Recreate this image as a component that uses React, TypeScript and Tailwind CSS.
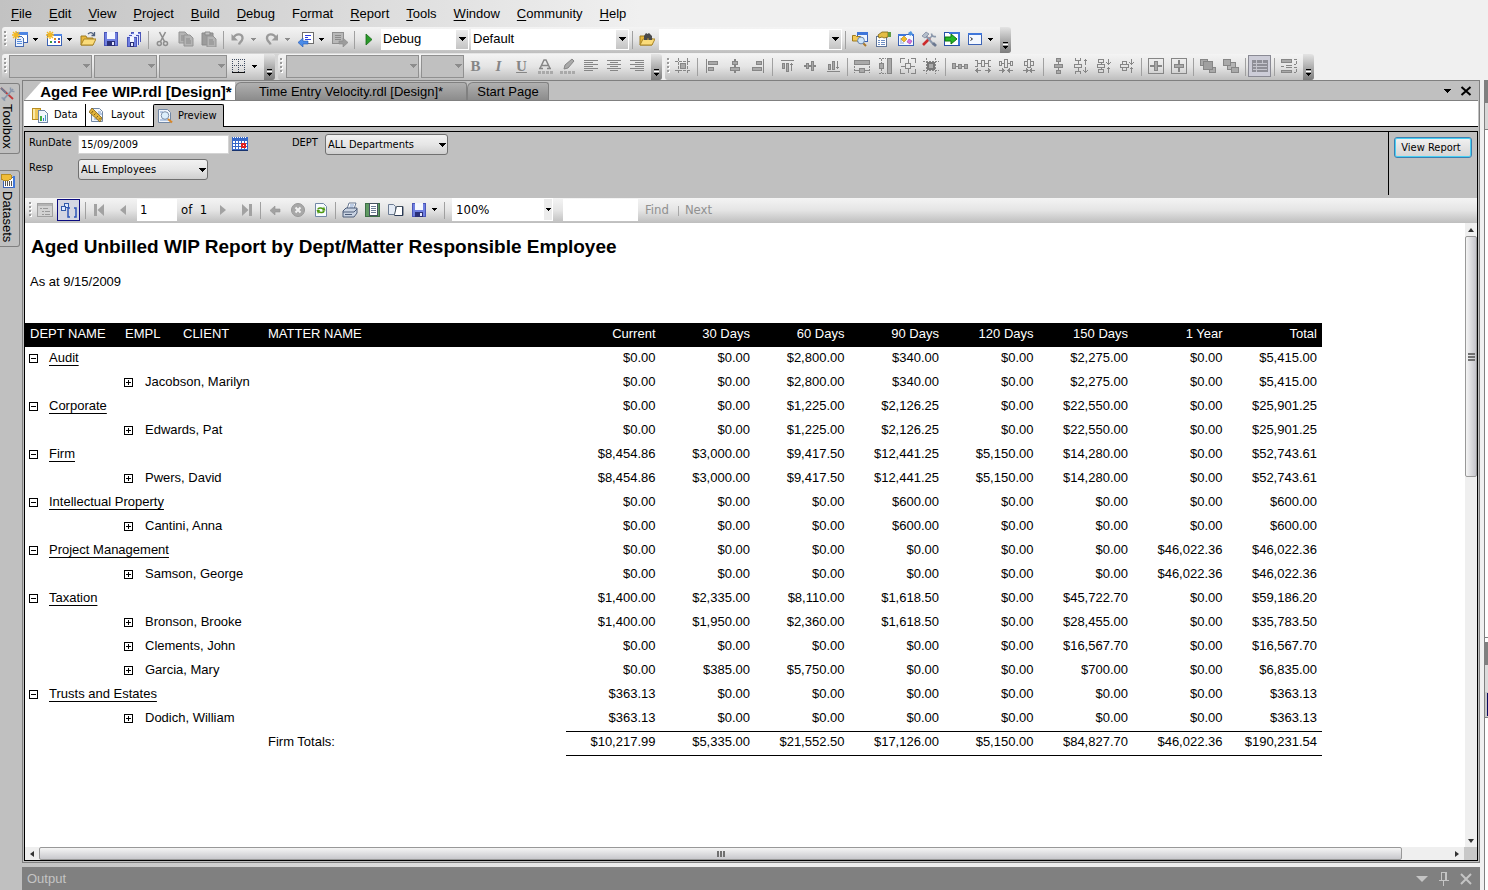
import React, { ReactNode } from "react";

const G = "#868686";
const L = "#a9a9a9";

function Svg({ children, smooth }: { children: ReactNode; smooth?: boolean }) {
  return (
    <svg
      viewBox="0 0 16 16"
      className="h-4 w-4 shrink-0"
      fill="none"
      aria-hidden="true"
      shapeRendering={smooth ? "auto" : "crispEdges"}
    >
      {children}
    </svg>
  );
}

const Star = () => (
  <path d="M4 0v8M0 4h8M1 1l6 6M7 1L1 7" stroke="#f2b824" strokeWidth="1.4" shapeRendering="auto" />
);

const Disk = ({ x = 1, y = 1, s = 14 }: { x?: number; y?: number; s?: number }) => (
  <g>
    <rect x={x} y={y} width={s} height={s} fill="#4a55b8" />
    <rect x={x + 1} y={y + 1} width={s - 2} height={s - 2} fill="#6f7fe0" />
    <rect x={x + 3} y={y} width={s - 6} height={Math.round(s / 2)} fill="#f4f7ff" />
    <rect x={x + 3} y={y + s - 5} width={s - 6} height={5} fill="#2b3078" />
    <rect x={x + s - 6} y={y + s - 4} width={2} height={3} fill="#e4e8ff" />
  </g>
);

const Sheet = ({ x, y }: { x: number; y: number }) => (
  <g>
    <path d={`M${x} ${y}h6l3 3v8h-9z`} fill="#b4b4b4" stroke="#949494" />
    <path d={`M${x + 2} ${y + 4}h4M${x + 2} ${y + 6}h5M${x + 2} ${y + 8}h5`} stroke="#8a8a8a" />
  </g>
);

const Folder = () => (
  <g shapeRendering="auto">
    <path d="M1 14V5h5l1 2h6v7z" fill="#e9b73a" stroke="#9c7a1e" />
    <path d="M1 14l3-6h12l-3 6z" fill="#fbdc7a" stroke="#a98527" />
  </g>
);

const icons: Record<string, ReactNode> = {
  newProject: (
    <Svg>
      <rect x="4.500" y="1.500" width="11" height="10" fill="#fff" stroke="#3b62b5" />
      <rect x="4" y="1" width="12" height="3" fill="#4f86e4" />
      <path d="M3.500 5.500h6l2 2v8h-8z" fill="#e9f1ff" stroke="#4a6db0" />
      <path d="M5 8.500h4M5 10.500h5M5 12.500h5" stroke="#5b8fdc" />
      <Star />
    </Svg>
  ),
  addItem: (
    <Svg>
      <rect x="1.500" y="3.500" width="14" height="11" fill="#fff" stroke="#3b62b5" />
      <rect x="7" y="3" width="9" height="2" fill="#4f86e4" />
      <rect x="8" y="7" width="2" height="2" fill="#e08a1e" />
      <rect x="12" y="7" width="2" height="2" fill="#3a62c8" />
      <rect x="4" y="10" width="2" height="2" fill="#3a9a3a" />
      <rect x="8" y="10" width="2" height="2" fill="#3a62c8" />
      <rect x="12" y="10" width="2" height="2" fill="#cf3434" />
      <Star />
    </Svg>
  ),
  open: (
    <Svg smooth>
      <Folder />
      <path d="M8 3c2-2 4-2 6 1M14.500 1v3.500h-3" stroke="#4e5f7c" strokeWidth="1.300" />
    </Svg>
  ),
  save: (
    <Svg>
      <Disk />
    </Svg>
  ),
  saveAll: (
    <Svg>
      <Disk x={5} y={1} s={10} />
      <path d="M3 3h11v11H3z" fill="#dfe4ff" />
      <Disk x={3} y={4} s={10} />
      <path d="M1 5h11v10H1z" fill="#dfe4ff" />
      <Disk x={1} y={6} s={10} />
    </Svg>
  ),
  cut: (
    <Svg smooth>
      <path d="M4.500 1l5 9.500M10.500 1l-5 9.500" stroke="#8e8e8e" strokeWidth="1.600" />
      <circle cx="4.300" cy="12.500" r="2" stroke="#8e8e8e" strokeWidth="1.500" />
      <circle cx="10.500" cy="12.500" r="2" stroke="#8e8e8e" strokeWidth="1.500" />
    </Svg>
  ),
  copy: (
    <Svg smooth>
      <Sheet x={1} y={1} />
      <Sheet x={6} y={4} />
    </Svg>
  ),
  paste: (
    <Svg smooth>
      <path d="M1 2h11v12H1z" fill="#9c9c9c" stroke="#8a8a8a" />
      <path d="M4 1h5v3H4z" fill="#c4c4c4" stroke="#8a8a8a" />
      <Sheet x={6} y={5} />
    </Svg>
  ),
  undo: (
    <Svg smooth>
      <path d="M3 7.500c3-6 10-5 9.500 0c-.3 3-3 3.500-3.500 6" stroke="#9a9a9a" strokeWidth="2.400" />
      <path d="M1.500 3v6.500H8z" fill="#9a9a9a" />
    </Svg>
  ),
  redo: (
    <Svg smooth>
      <path d="M12.500 7.500c-3-6-10-5-9.500 0c.3 3 3 3.500 3.500 6" stroke="#9a9a9a" strokeWidth="2.400" />
      <path d="M14 3v6.500H7.500z" fill="#9a9a9a" />
    </Svg>
  ),
  navBack: (
    <Svg>
      <rect x="4.500" y="1.500" width="11" height="11" fill="#fff" stroke="#6d6d6d" />
      <path d="M7 4.500h6M7 6.500h3M7 8.500h6" stroke="#2a3fe0" />
      <path d="M0 11.500L5 7v3h5v3H5v3z" fill="#4a8be8" stroke="#2457b0" strokeWidth=".6" shapeRendering="auto" />
    </Svg>
  ),
  navForward: (
    <Svg>
      <rect x=".5" y="1.500" width="11" height="11" fill="#b8b8b8" stroke="#8e8e8e" />
      <path d="M3 4.500h6M3 6.500h6M3 8.500h6" stroke="#8a8a8a" />
      <path d="M16 11.500L11 7v3H7v3h4v3z" fill="#9c9c9c" stroke="#868686" strokeWidth=".6" shapeRendering="auto" />
    </Svg>
  ),
  play: (
    <Svg smooth>
      <path d="M5 3v11l6-5.500z" fill="#2a9a2a" stroke="#166a16" strokeWidth=".8" />
    </Svg>
  ),
  findFiles: (
    <Svg smooth>
      <Folder />
      <path d="M5 9V5l2-3 1.500 1L10 2l3 3v4H9.500V7h-1v2z" fill="#4a4a4a" />
    </Svg>
  ),
  explorer: (
    <Svg smooth>
      <rect x="5.500" y="1.500" width="10" height="9" fill="#eef4ff" stroke="#3b62b5" />
      <rect x="5" y="1" width="11" height="3" fill="#3f76da" />
      <path d="M.5 10V4.500h3l1 1h4V10z" fill="#f4ca56" stroke="#9c7a1e" />
      <path d="M11 12l3 3" stroke="#a9772a" strokeWidth="2" />
      <circle cx="9" cy="9.500" r="3.400" fill="#cfe6fb" stroke="#6b86ab" />
    </Svg>
  ),
  properties: (
    <Svg smooth>
      <rect x="1.500" y="5.500" width="10" height="10" fill="#fff" stroke="#5f7396" />
      <path d="M3 9.500h2M6 9.500h4M3 11.500h2M6 11.500h4M3 13.500h2M6 13.500h4" stroke="#6f8fc4" />
      <path d="M3 4l4-3h6v5L9 7 7 6 4 7z" fill="#e3bd45" stroke="#7c6212" strokeWidth=".8" />
      <path d="M13 1h3v5h-3z" fill="#5f9a42" />
    </Svg>
  ),
  toolWindow: (
    <Svg smooth>
      <rect x=".5" y="3.500" width="15" height="11" fill="#f4f8ff" stroke="#3b62b5" />
      <path d="M0 3h8v2H0zM14 3h2v2h-2z" fill="#3f76da" />
      <path d="M2 8h3M2 10h2M2 12h4" stroke="#88a6d8" />
      <path d="M6 5l3 3-3 3-3-3z" fill="#f2b824" stroke="#b98510" strokeWidth=".6" />
      <path d="M11 8l3 2-2 3-3-2z" fill="#d873e0" stroke="#9a3fa5" strokeWidth=".6" />
      <path d="M10 2l3-2 2 3-3 2z" fill="#4f93e0" />
    </Svg>
  ),
  toolbox: (
    <Svg smooth>
      <path d="M2 14l7-7" stroke="#cc2b2b" strokeWidth="2.600" />
      <path d="M8 8l4-4" stroke="#8a97ab" strokeWidth="1.500" />
      <path d="M13 14L5 5" stroke="#8a97ab" strokeWidth="2" />
      <path d="M1 5l4-4 3 2-4 4z" fill="#b4bdca" stroke="#76839a" strokeWidth=".7" />
      <path d="M10.500 2.500c0 3 2 3.500 4.500 3" stroke="#8a97ab" strokeWidth="1.600" />
      <path d="M12 12l3 3" stroke="#6b7890" strokeWidth="2.600" />
    </Svg>
  ),
  tools: (
    <Svg smooth>
      <path d="M1 2l12 11" stroke="#c23a3a" strokeWidth="1.800" />
      <path d="M1 2l5 5" stroke="#6f7c92" strokeWidth="1.800" />
      <path d="M13 3L3 14" stroke="#8a97ab" strokeWidth="1.800" />
      <path d="M10.500 1.500c-.5 3 1.500 4.500 4 4M1.500 12c2-.5 3.500 1 3 3" stroke="#8a97ab" strokeWidth="1.500" />
    </Svg>
  ),
  startPage: (
    <Svg>
      <rect x=".5" y="1.500" width="15" height="13" fill="#fff" stroke="#2850a8" />
      <rect x="5" y="1" width="11" height="2" fill="#3f76da" />
      <rect x="14" y="3" width="2" height="11" fill="#3f76da" />
      <path d="M1 6h6V3l6 5-6 5v-3H1z" fill="#27b827" stroke="#11750f" shapeRendering="auto" />
    </Svg>
  ),
  command: (
    <Svg>
      <rect x="1.500" y="2.500" width="13" height="11" fill="#f4f8ff" stroke="#3b62b5" />
      <rect x="1" y="2" width="14" height="2" fill="#3f76da" />
      <path d="M3.500 6.500l2 1.500-2 1.500" stroke="#222" shapeRendering="auto" />
    </Svg>
  ),
  borders: (
    <Svg>
      <path d="M1.500 1v13M7.500 1v13M13.500 1v13M1 1.500h13M1 7.500h13" stroke="#3d4a5e" strokeDasharray="1 1" />
      <path d="M1 14.500h13" stroke="#111" />
    </Svg>
  ),
  fontColor: (
    <Svg>
      <path d="M3 10.500L7 2h2l4 8.500M5 7.500h6M2 10.500h4M10 10.500h4" stroke={G} strokeWidth="1.500" shapeRendering="auto" />
      <path d="M1 14h15" stroke={L} strokeWidth="3" strokeDasharray="3 1" />
    </Svg>
  ),
  highlight: (
    <Svg>
      <path d="M4 11l1-4 7-6 2 2-6 7z" fill={L} stroke={G} shapeRendering="auto" />
      <path d="M0 14h15" stroke={L} strokeWidth="3" strokeDasharray="3 1" />
    </Svg>
  ),
  alignL: (
    <Svg>
      <path d="M1 2.500h14M1 4.500h9M1 6.500h14M1 8.500h9M1 10.500h14M1 12.500h9" stroke={G} />
    </Svg>
  ),
  alignC: (
    <Svg>
      <path d="M1 2.500h14M4 4.500h8M1 6.500h14M4 8.500h8M1 10.500h14M4 12.500h8" stroke={G} />
    </Svg>
  ),
  alignR: (
    <Svg>
      <path d="M1 2.500h14M6 4.500h9M1 6.500h14M6 8.500h9M1 10.500h14M6 12.500h9" stroke={G} />
    </Svg>
  ),
  snapGrid: (
    <Svg>
      <path d="M3.500 0v16M12.500 0v16M0 3.500h16M0 12.500h16" stroke={G} strokeDasharray="3 1" />
      <rect x="5.500" y="5.500" width="5" height="5" fill={L} stroke={G} />
    </Svg>
  ),
  lefts: (
    <Svg>
      <path d="M2.500 1v14" stroke={G} />
      <rect x="4.500" y="3.500" width="9" height="3" fill={L} stroke={G} />
      <rect x="4.500" y="9.500" width="5" height="3" fill={L} stroke={G} />
    </Svg>
  ),
  centers: (
    <Svg>
      <path d="M8 1v14" stroke={G} strokeWidth="2" />
      <rect x="5.500" y="3.500" width="5" height="3" fill={L} stroke={G} />
      <rect x="3.500" y="9.500" width="9" height="3" fill={L} stroke={G} />
    </Svg>
  ),
  rights: (
    <Svg>
      <path d="M13.500 1v14" stroke={G} strokeWidth="1" />
      <rect x="6.500" y="3.500" width="5" height="3" fill={L} stroke={G} />
      <rect x="2.500" y="9.500" width="9" height="3" fill={L} stroke={G} />
    </Svg>
  ),
  tops: (
    <Svg>
      <path d="M2 2.500h13M12.500 5v8M11 6.500h3" stroke={G} />
      <rect x="3.500" y="5.500" width="2" height="5" fill={L} stroke={G} />
      <rect x="7.500" y="5.500" width="2" height="8" fill={L} stroke={G} />
    </Svg>
  ),
  middles: (
    <Svg>
      <path d="M2 8h12" stroke={G} strokeWidth="2" />
      <rect x="4.500" y="5.500" width="2" height="5" fill={L} stroke={G} />
      <rect x="9.500" y="3.500" width="2" height="9" fill={L} stroke={G} />
    </Svg>
  ),
  bottoms: (
    <Svg>
      <path d="M2 13.500h13M12.500 3v8M11 9.500h3" stroke={G} />
      <rect x="3.500" y="6.500" width="2" height="5" fill={L} stroke={G} />
      <rect x="7.500" y="3.500" width="2" height="8" fill={L} stroke={G} />
    </Svg>
  ),
  sameWidth: (
    <Svg>
      <rect x=".5" y="2.500" width="15" height="4" fill={L} stroke={G} />
      <path d="M.5 8v7M15.500 8v7" stroke={G} strokeDasharray="2 1" />
      <path d="M1 12.500h4M11 12.500h4" stroke={G} />
      <rect x="5.500" y="10.500" width="5" height="4" fill={L} stroke={G} />
    </Svg>
  ),
  sameHeight: (
    <Svg>
      <rect x="10.500" y=".5" width="4" height="15" fill={L} stroke={G} />
      <path d="M2 .5h7M2 15.500h7M4.500 1v4M4.500 11v4" stroke={G} strokeDasharray="2 1" />
      <rect x="2.500" y="5.500" width="4" height="5" fill={L} stroke={G} />
    </Svg>
  ),
  sameSize: (
    <Svg>
      <path d="M.5 5V.5H5M11 .5h4.500V5M15.500 11v4.500H11M5 15.500H.5V11M8.500 1v4M8.500 11v4M1 8.500h4M11 8.500h4" stroke={G} />
      <rect x="5.500" y="5.500" width="5" height="5" stroke={G} />
    </Svg>
  ),
  sizeGrid: (
    <Svg>
      <path d="M3.500 0v16M12.500 0v16M0 3.500h16M0 12.500h16" stroke={G} strokeDasharray="2 1" />
      <rect x="4" y="4" width="8" height="8" fill="#777" />
      <rect x="6" y="6" width="4" height="4" fill={L} />
    </Svg>
  ),
  hEqual: (
    <Svg>
      <path d="M0 8.500h16" stroke={G} />
      <rect x=".5" y="5.500" width="3" height="5" fill={L} stroke={G} />
      <rect x="6.500" y="6.500" width="3" height="4" fill={L} stroke={G} />
      <rect x="12.500" y="6.500" width="3" height="4" fill={L} stroke={G} />
    </Svg>
  ),
  hMore: (
    <Svg>
      <path d="M0 2.500h2.500v6H0M16 2.500h-2.500v6h2.500M3 5.500h3M10 5.500h3M1 12.500h5M10 12.500h5M3 10.500l-2 2 2 2M13 10.500l2 2-2 2" stroke={G} />
      <rect x="6.500" y="2.500" width="3" height="6" stroke={G} />
    </Svg>
  ),
  hLess: (
    <Svg>
      <path d="M1.500 3.500h2v4h-2zM12.500 3.500h2v4h-2zM4 5.500h2M10 5.500h2M1 12.500h5M10 12.500h5M4 10.500l2 2-2 2M12 10.500l-2 2 2 2" stroke={G} />
      <rect x="6.500" y="1.500" width="3" height="8" stroke={G} />
    </Svg>
  ),
  hNone: (
    <Svg>
      <path d="M3.500 3.500h3v4h-3zM9.500 3.500h3v4h-3zM2 12.500h5M9 12.500h5M5 10.500l2 2-2 2M11 10.500l-2 2 2 2" stroke={G} />
      <rect x="6.500" y="1.500" width="3" height="8" stroke={G} />
    </Svg>
  ),
  vEqual: (
    <Svg>
      <path d="M8.500 0v16" stroke={G} />
      <rect x="6.500" y=".5" width="4" height="3" fill={L} stroke={G} />
      <rect x="4.500" y="6.500" width="8" height="3" fill={L} stroke={G} />
      <rect x="6.500" y="12.500" width="4" height="3" fill={L} stroke={G} />
    </Svg>
  ),
  vMore: (
    <Svg>
      <path d="M2.500 0v2.500h5V0M2.500 16v-2.500h5V16M5 3v3M5 10v3M12.500 1v6M12.500 9v6M10.500 3.500l2-2 2 2M10.500 12.500l2 2 2-2" stroke={G} />
      <rect x="1.500" y="6.500" width="7" height="3" stroke={G} />
    </Svg>
  ),
  vLess: (
    <Svg>
      <path d="M2.500 1.500h5v3h-5zM2.500 11.500h5v3h-5zM5 4v3M5 9v3M12.500 1v6M12.500 9v6M10.500 4.500l2 2 2-2M10.500 11.500l2-2 2 2" stroke={G} />
      <rect x="1.500" y="6.500" width="7" height="3" stroke={G} />
    </Svg>
  ),
  vNone: (
    <Svg>
      <path d="M3.500 3.500h4v3h-4zM3.500 9.500h4v3h-4zM12.500 1v6M12.500 9v6M10.500 4.500l2 2 2-2M10.500 11.500l2-2 2 2" stroke={G} />
      <rect x="1.500" y="6.500" width="8" height="3" stroke={G} />
    </Svg>
  ),
  centerH: (
    <Svg>
      <rect x=".5" y=".5" width="15" height="15" stroke={G} />
      <path d="M2 8h12" stroke={G} strokeWidth="2" />
      <rect x="6.500" y="3.500" width="3" height="9" fill={L} stroke={G} />
    </Svg>
  ),
  centerV: (
    <Svg>
      <rect x=".5" y=".5" width="15" height="15" stroke={G} />
      <path d="M8 2v12" stroke={G} strokeWidth="2" />
      <rect x="3.500" y="6.500" width="9" height="3" fill={L} stroke={G} />
    </Svg>
  ),
  toFront: (
    <Svg>
      <rect x=".5" y="1.500" width="7" height="6" fill={L} stroke={G} />
      <rect x="9.500" y="9.500" width="6" height="5" fill={L} stroke={G} />
      <rect x="3.500" y="3.500" width="9" height="8" fill="#a0a0a0" stroke={G} />
    </Svg>
  ),
  toBack: (
    <Svg>
      <rect x="4.500" y="4.500" width="8" height="7" fill="#b4b4b4" stroke={G} />
      <rect x=".5" y="1.500" width="7" height="6" fill={L} stroke={G} />
      <rect x="8.500" y="9.500" width="7" height="5" fill={L} stroke={G} />
    </Svg>
  ),
  tableGrid: (
    <Svg>
      <rect x="0" y="2" width="16" height="12" fill="#8e8e96" />
      <path d="M1 5.500h14M1 8.500h14M1 11.500h14M4.500 2v12M10.500 2v4" stroke="#c4c4cc" />
    </Svg>
  ),
  tabOrder: (
    <Svg>
      <rect x=".5" y="1.500" width="10" height="3" fill={L} stroke={G} />
      <path d="M0 8.500h3M5 7.500h6M5 9.500h6" stroke={G} />
      <rect x=".5" y="12.500" width="10" height="2" fill={L} stroke={G} />
      <path d="M13 1.500h2.500v5H13M13 9.500h2.500v5H13" stroke={G} strokeDasharray="3 1" />
    </Svg>
  ),
  data: (
    <Svg>
      <rect x="0" y="1" width="8" height="11" fill="#efc758" stroke="#b98e22" />
      <rect x="1" y="2" width="2" height="10" fill="#fbe9a8" />
      <path d="M6.500 3.500h6l3 3v9h-9z" fill="#f1f6fc" stroke="#7187a5" />
      <path d="M9 9v5" stroke="#3fae3f" strokeWidth="2" />
      <path d="M11.500 11v3" stroke="#3f6fd0" />
      <path d="M13.500 8v6" stroke="#3fa0c0" />
    </Svg>
  ),
  layout: (
    <Svg smooth>
      <path d="M2.500 1.500h8l3 3v10h-11z" fill="#f1f6fc" stroke="#7187a5" />
      <path d="M9 7h4M9 5h3M5 12h4" stroke="#7c9ccc" />
      <path d="M0 5l3-4 10 10-2 4z" fill="#e0b23a" stroke="#7f611a" strokeWidth=".8" />
      <path d="M4 4l-1.500 2M6.500 6.500L5 8M9 9l-1.500 1.500M11.500 11L10 12.500" stroke="#7f611a" />
    </Svg>
  ),
  preview: (
    <Svg smooth>
      <path d="M1.500 1.500h9l3 3v10h-12z" fill="#f1f6fc" stroke="#7187a5" />
      <path d="M3 4h3M3 12h8" stroke="#7c9ccc" />
      <path d="M11 11l4 3.500" stroke="#d8872a" strokeWidth="2.200" />
      <circle cx="8" cy="7.500" r="3.800" fill="#dceefb" stroke="#7d8fa8" />
    </Svg>
  ),
  calendar: (
    <Svg>
      <rect x="0" y="1" width="16" height="14" fill="#3567c8" />
      <rect x="0" y="14" width="16" height="1" fill="#17336f" />
      <path d="M1 1.500h14" stroke="#fff" strokeDasharray="1 1" />
      <path d="M1 6h14M1 9h14M1 12h14" stroke="#fff" strokeWidth="2" strokeDasharray="2 1" />
      <rect x="9" y="7" width="5" height="5" fill="#e02020" />
      <rect x="11" y="9" width="1" height="1" fill="#fff" />
    </Svg>
  ),
  docMap: (
    <Svg>
      <rect x=".5" y="1.500" width="15" height="13" fill="#d2d2d2" stroke="#a0a0a0" />
      <path d="M1 3h14" stroke="#b4b4b4" strokeWidth="2" />
      <path d="M3 6.500h2M6 6.500h5M5 9.500h2M8 9.500h5M5 12.500h2M8 12.500h5" stroke="#999" />
    </Svg>
  ),
  paramTree: (
    <Svg>
      <rect x="3.500" y="1.500" width="4" height="4" fill="#dce8ff" stroke="#3159a8" />
      <rect x=".5" y="4.500" width="4" height="4" fill="#dce8ff" stroke="#3159a8" />
      <path d="M9 6h-2v9h2M13 6h2v9h-2" stroke="#2c55b8" strokeWidth="1.500" shapeRendering="auto" />
    </Svg>
  ),
  first: (
    <Svg smooth>
      <rect x="2" y="2" width="3" height="12" fill="#a2a2a2" />
      <path d="M12 2v12L5.500 8z" fill="#a2a2a2" />
    </Svg>
  ),
  prev: (
    <Svg smooth>
      <path d="M11 3v10L5 8z" fill="#a2a2a2" />
    </Svg>
  ),
  next: (
    <Svg smooth>
      <path d="M5 3v10l6-5z" fill="#a2a2a2" />
    </Svg>
  ),
  last: (
    <Svg smooth>
      <rect x="11" y="2" width="3" height="12" fill="#a2a2a2" />
      <path d="M4 2v12l6.500-6z" fill="#a2a2a2" />
    </Svg>
  ),
  back: (
    <Svg smooth>
      <path d="M3 8.500L8 4v3h5v3H8v3z" fill="#a2a2a2" stroke="#949494" strokeWidth=".6" />
    </Svg>
  ),
  stop: (
    <Svg smooth>
      <circle cx="8" cy="8" r="6.500" fill="#a8a8a8" stroke="#989898" />
      <path d="M5.500 5.500l5 5M10.500 5.500l-5 5" stroke="#f0f0f0" strokeWidth="2" />
    </Svg>
  ),
  refresh: (
    <Svg smooth>
      <path d="M2.500 1.500h8l3 3v10h-11z" fill="#f7fbff" stroke="#7187a5" />
      <path d="M5 7.500c0-2 4-2 5-.5M11 8.500c0 2.500-4 2.500-5.500 1" stroke="#4f9a12" strokeWidth="1.500" />
      <path d="M9 8.500h3.500L11 4.500zM7 8H3.500L5 12z" fill="#4f9a12" />
    </Svg>
  ),
  print: (
    <Svg smooth>
      <path d="M5 7l2-6h7l-2 6z" fill="#fff" stroke="#687892" />
      <path d="M8 3h4M7.500 5h4" stroke="#7c9ccc" />
      <path d="M1 9l3-3h11v5l-3 4H1z" fill="#c9d3e2" stroke="#4c5c78" />
      <path d="M1 10h11l3-3M3 12.500h7" stroke="#4c5c78" />
    </Svg>
  ),
  printLayout: (
    <Svg>
      <rect x=".5" y="1.500" width="14" height="13" fill="#5f9a62" stroke="#3d6e46" />
      <rect x="4.500" y="1.500" width="8" height="12" fill="#fff" stroke="#44515f" />
      <path d="M6 4.500h5M6 6.500h5M6 8.500h5M6 10.500h5" stroke="#6c7c94" />
    </Svg>
  ),
  pageSetup: (
    <Svg smooth>
      <path d="M.5 2.500h5l2 2v8h-7z" fill="#e4ebf5" stroke="#6c7c94" />
      <path d="M6.500 12.500l2-8h6.500v9H6.500z" fill="#fff" stroke="#44515f" />
      <path d="M14.500 5v8.500H7" stroke="#2d3c58" />
    </Svg>
  ),
  dataset: (
    <Svg>
      <rect x="3.500" y="4.500" width="11" height="10" fill="#fff" stroke="#3b62b5" />
      <rect x="13" y="3" width="2" height="12" fill="#3f76da" />
      <path d="M5.500 8v5M7.500 8v5M9.500 8v5M11.500 8v5" stroke="#555" />
      <path d="M1 2l2-1h6l2 1v4l-2 1H3L1 6z" fill="#f0bd3a" stroke="#b98e22" />
    </Svg>
  ),
};

const letterIcon: Record<string, [string, string]> = {
  bold: ["B", "font-bold"],
  italic: ["I", "italic font-bold"],
  underline: ["U", "underline font-bold"],
};

function IconButton({ name, pressed }: { name: string; pressed?: boolean }) {
  return (
    <button
      type="button"
      aria-label={name}
      className={
        pressed
          ? "flex h-[22px] w-[23px] shrink-0 items-center justify-center border border-[#8a8a94] bg-[#cdcdd8]"
          : "flex h-[22px] w-[23px] shrink-0 items-center justify-center"
      }
    >
      {letterIcon[name] ? (
        <span className={`font-["Liberation_Serif",serif] text-[15px] leading-4 text-[#868686] ${letterIcon[name][1]}`}>
          {letterIcon[name][0]}
        </span>
      ) : (
        icons[name]
      )}
    </button>
  );
}

function Arrow({ light }: { light?: boolean }) {
  return (
    <svg viewBox="0 0 5 3" className="h-[3px] w-[5px]" aria-hidden="true" shapeRendering="crispEdges">
      <path d="M0 0h5v1H0zM1 1h3v1H1zM2 2h1v1H2z" fill={light ? "#8c8c8c" : "#000"} />
    </svg>
  );
}

function BigArrow({ fill = "#000" }: { fill?: string }) {
  return (
    <svg viewBox="0 0 8 4" className="h-1 w-2" aria-hidden="true" shapeRendering="crispEdges">
      <path d="M0 0h8L4 4z" fill={fill} />
    </svg>
  );
}

function Drop({ light, label }: { light?: boolean; label: string }) {
  return (
    <button type="button" aria-label={label} className="flex h-[22px] w-[11px] shrink-0 items-center justify-start pl-[2px]">
      <Arrow light={light} />
    </button>
  );
}

const Sep = () => (
  <div className="flex w-[6px] shrink-0 justify-center self-stretch pt-1 pb-[2px]">
    <div className="w-px bg-[#a0a0a0]" />
  </div>
);

function Grip() {
  return (
    <svg viewBox="0 0 6 16" className="h-4 w-[6px] shrink-0" aria-hidden="true" shapeRendering="crispEdges">
      {[0, 4, 8, 12].map((y) => (
        <g key={y}>
          <rect x="3" y={y + 1} width="2" height="2" fill="#fff" />
          <rect x="2" y={y} width="2" height="2" fill="#9a9a9a" />
        </g>
      ))}
    </svg>
  );
}

function Overflow() {
  return (
    <button
      type="button"
      aria-label="Toolbar options"
      className="-mb-[2px] ml-[3px] flex w-[11px] shrink-0 flex-col items-center justify-end gap-px self-stretch rounded-r-[3px] bg-linear-to-b from-[#e4e4e4] to-[#7c7c7c] pb-1"
    >
      <span className="h-px w-[5px] bg-black" />
      <span className="h-px w-[5px] bg-white" />
      <Arrow />
    </button>
  );
}

function FlatCombo({ label, value, className }: { label: string; value: string; className: string }) {
  return (
    <div className={`relative h-[21px] shrink-0 ${className}`}>
      <select
        aria-label={label}
        className="block h-full w-full appearance-none bg-white pl-[2px] text-[13px] leading-4 text-black"
      >
        <option>{value}</option>
      </select>
      <span className="pointer-events-none absolute inset-y-px right-px flex w-3 items-center justify-center bg-linear-to-b from-[#ececec] to-[#c4c4c4]">
        <svg viewBox="0 0 7 4" className="h-1 w-[7px]" aria-hidden="true" shapeRendering="crispEdges">
          <path d="M0 0h7v1H0zM1 1h5v1H1zM2 2h3v1H2zM3 3h1v1H3z" fill="#000" />
        </svg>
      </span>
    </div>
  );
}

function DisabledCombo({ label, className }: { label: string; className: string }) {
  return (
    <div className={`relative h-[23px] shrink-0 ${className}`}>
      <select aria-label={label} disabled className="block h-full w-full appearance-none border border-[#909090] bg-[#c0c0c0]">
        <option></option>
      </select>
      <span className="pointer-events-none absolute inset-y-0 right-[2px] flex items-center">
        <BigArrow fill="#8c8c8c" />
      </span>
    </div>
  );
}

function ParamSelect({ id, value, className }: { id: string; value: string; className: string }) {
  return (
    <div className={`relative h-[21px] ${className}`}>
      <select
        id={id}
        className="block h-full w-full appearance-none rounded-[3px] border border-[#707070] bg-linear-to-b from-[#f2f2f2] via-[#e6e6e6] to-[#cfcfcf] pt-[2px] pl-[2px] text-[11px]"
      >
        <option>{value}</option>
      </select>
      <span className="pointer-events-none absolute inset-y-0 right-[2px] flex items-center">
        <BigArrow />
      </span>
    </div>
  );
}

const menus = ["File", "Edit", "View", "Project", "Build", "Debug", "Format", "Report", "Tools", "Window", "Community", "Help"];

const layoutGroups = [
  ["snapGrid"],
  ["lefts", "centers", "rights"],
  ["tops", "middles", "bottoms"],
  ["sameWidth", "sameHeight", "sameSize", "sizeGrid"],
  ["hEqual", "hMore", "hLess", "hNone"],
  ["vEqual", "vMore", "vLess", "vNone"],
  ["centerH", "centerV"],
  ["toFront", "toBack"],
  ["tableGrid"],
  ["tabOrder"],
];

const amountHeads = ["Current", "30 Days", "60 Days", "90 Days", "120 Days", "150 Days", "1 Year", "Total"];

type Row = { dept?: string; empl?: string; v: string[] };
const Z = "$0.00";
const rows: Row[] = [
  { dept: "Audit", v: [Z, Z, "$2,800.00", "$340.00", Z, "$2,275.00", Z, "$5,415.00"] },
  { empl: "Jacobson, Marilyn", v: [Z, Z, "$2,800.00", "$340.00", Z, "$2,275.00", Z, "$5,415.00"] },
  { dept: "Corporate", v: [Z, Z, "$1,225.00", "$2,126.25", Z, "$22,550.00", Z, "$25,901.25"] },
  { empl: "Edwards, Pat", v: [Z, Z, "$1,225.00", "$2,126.25", Z, "$22,550.00", Z, "$25,901.25"] },
  { dept: "Firm", v: ["$8,454.86", "$3,000.00", "$9,417.50", "$12,441.25", "$5,150.00", "$14,280.00", Z, "$52,743.61"] },
  { empl: "Pwers, David", v: ["$8,454.86", "$3,000.00", "$9,417.50", "$12,441.25", "$5,150.00", "$14,280.00", Z, "$52,743.61"] },
  { dept: "Intellectual Property", v: [Z, Z, Z, "$600.00", Z, Z, Z, "$600.00"] },
  { empl: "Cantini, Anna", v: [Z, Z, Z, "$600.00", Z, Z, Z, "$600.00"] },
  { dept: "Project Management", v: [Z, Z, Z, Z, Z, Z, "$46,022.36", "$46,022.36"] },
  { empl: "Samson, George", v: [Z, Z, Z, Z, Z, Z, "$46,022.36", "$46,022.36"] },
  { dept: "Taxation", v: ["$1,400.00", "$2,335.00", "$8,110.00", "$1,618.50", Z, "$45,722.70", Z, "$59,186.20"] },
  { empl: "Bronson, Brooke", v: ["$1,400.00", "$1,950.00", "$2,360.00", "$1,618.50", Z, "$28,455.00", Z, "$35,783.50"] },
  { empl: "Clements, John", v: [Z, Z, Z, Z, Z, "$16,567.70", Z, "$16,567.70"] },
  { empl: "Garcia, Mary", v: [Z, "$385.00", "$5,750.00", Z, Z, "$700.00", Z, "$6,835.00"] },
  { dept: "Trusts and Estates", v: ["$363.13", Z, Z, Z, Z, Z, Z, "$363.13"] },
  { empl: "Dodich, William", v: ["$363.13", Z, Z, Z, Z, Z, Z, "$363.13"] },
];
const totals = ["$10,217.99", "$5,335.00", "$21,552.50", "$17,126.00", "$5,150.00", "$84,827.70", "$46,022.36", "$190,231.54"];

function Toggle({ open, label }: { open?: boolean; label: string }) {
  return (
    <button type="button" aria-label={label} className="mt-px h-[9px] w-[9px] shrink-0">
      <svg viewBox="0 0 9 9" className="block h-[9px] w-[9px]" aria-hidden="true" shapeRendering="crispEdges">
        <rect x=".5" y=".5" width="8" height="8" fill="#fff" stroke="#000" />
        <path d={open ? "M2 4.500h5" : "M2 4.500h5M4.500 2v5"} stroke="#000" />
      </svg>
    </button>
  );
}

function MenuBar() {
  return (
    <nav className="flex h-[27px] shrink-0 items-center gap-px pl-[3px]">
      {menus.map((m) => {
        const at = m === "Format" ? 1 : 0;
        return (
          <button key={m} type="button" className="px-2 text-[13px] leading-4">
            {m.slice(0, at)}
            <span className="underline underline-offset-2">{m[at]}</span>
            {m.slice(at + 1)}
          </button>
        );
      })}
    </nav>
  );
}

const barTone = "bg-linear-to-b from-[#f4f4f4] via-[#e4e4e4] to-[#bebebe] pb-[2px]";

function StandardToolbar() {
  return (
    <div className="flex h-[26px] shrink-0 pl-[2px]">
      <div className={`flex items-center rounded-[3px] ${barTone}`}>
        <Grip />
        <IconButton name="newProject" />
        <Drop label="New project options" />
        <IconButton name="addItem" />
        <Drop label="Add item options" />
        <IconButton name="open" />
        <IconButton name="save" />
        <IconButton name="saveAll" />
        <Sep />
        <IconButton name="cut" />
        <IconButton name="copy" />
        <IconButton name="paste" />
        <Sep />
        <IconButton name="undo" />
        <Drop light label="Undo history" />
        <IconButton name="redo" />
        <Drop light label="Redo history" />
        <IconButton name="navBack" />
        <Drop label="Navigate history" />
        <IconButton name="navForward" />
        <Sep />
        <IconButton name="play" />
        <FlatCombo label="Solution configuration" value="Debug" className="ml-px w-[88px]" />
        <FlatCombo label="Solution platform" value="Default" className="ml-[2px] w-[158px]" />
        <Sep />
        <IconButton name="findFiles" />
        <FlatCombo label="Find" value="" className="ml-px w-[183px]" />
        <Sep />
        <IconButton name="explorer" />
        <IconButton name="properties" />
        <IconButton name="toolWindow" />
        <IconButton name="toolbox" />
        <IconButton name="startPage" />
        <IconButton name="command" />
        <Drop label="Command options" />
        <Overflow />
      </div>
    </div>
  );
}

function FormatToolbars() {
  return (
    <div className="mt-px flex h-[26px] shrink-0 gap-[3px] pl-[2px]">
      <div className={`flex items-center rounded-[3px] ${barTone}`}>
        <Grip />
        <div className="flex gap-[2px] pl-px">
          <DisabledCombo label="Object" className="w-[83px]" />
          <DisabledCombo label="Border style" className="w-[63px]" />
          <DisabledCombo label="Border width" className="w-[68px]" />
        </div>
        <IconButton name="borders" />
        <Drop label="Border options" />
        <Overflow />
      </div>
      <div className={`flex items-center rounded-[3px] ${barTone}`}>
        <Grip />
        <div className="flex gap-[2px] pl-[2px]">
          <DisabledCombo label="Font" className="w-[133px]" />
          <DisabledCombo label="Font size" className="w-[43px]" />
        </div>
        <IconButton name="bold" />
        <IconButton name="italic" />
        <IconButton name="underline" />
        <IconButton name="fontColor" />
        <IconButton name="highlight" />
        <IconButton name="alignL" />
        <IconButton name="alignC" />
        <IconButton name="alignR" />
        <Overflow />
      </div>
      <div className={`flex items-center rounded-[3px] ${barTone}`}>
        <Grip />
        {layoutGroups.map((g, i) => (
          <React.Fragment key={i}>
            {i > 0 && <Sep />}
            {g.map((n) => (
              <IconButton key={n} name={n} pressed={n === "tableGrid"} />
            ))}
          </React.Fragment>
        ))}
        <Overflow />
      </div>
    </div>
  );
}

function SideTab({ icon, label, className }: { icon: string; label: string; className: string }) {
  return (
    <button
      type="button"
      className={`flex w-5 flex-col items-center gap-[2px] rounded-r-[3px] border border-l-0 border-[#808080] pt-[2px] pr-1 ${className}`}
    >
      {icons[icon]}
      <span className="pr-[2px] text-[13px] leading-4 [writing-mode:vertical-rl]">{label}</span>
    </button>
  );
}

function DocumentTabs() {
  return (
    <div className="flex h-[20px] shrink-0 items-end border-b border-[#808080]">
      <button
        type="button"
        className="ml-px h-[18px] w-[210px] bg-white pl-3 text-center text-[15px] leading-[17px] font-bold whitespace-nowrap [clip-path:polygon(0_100%,16px_0,100%_0,100%_100%)]"
      >
        Aged Fee WIP.rdl [Design]*
      </button>
      <button
        type="button"
        className="h-[18px] w-[232px] rounded-tl-[6px] rounded-tr-[3px] border border-b-0 border-[#808080] bg-linear-to-b from-[#b0b0b0] to-[#8c8c8c] text-center text-[13px] leading-4 whitespace-nowrap"
      >
        Time Entry Velocity.rdl [Design]*
      </button>
      <button
        type="button"
        className="h-[18px] w-[82px] rounded-tl-[6px] rounded-tr-[3px] border border-b-0 border-[#808080] bg-linear-to-b from-[#b0b0b0] to-[#8c8c8c] text-center text-[13px] leading-4 whitespace-nowrap"
      >
        Start Page
      </button>
      <div className="ml-auto flex h-full items-center gap-[9px] pr-[6px]">
        <button type="button" aria-label="Active files">
          <BigArrow />
        </button>
        <button type="button" aria-label="Close document">
          <CloseMark color="#000" />
        </button>
      </div>
    </div>
  );
}

function CloseMark({ color }: { color: string }) {
  return (
    <svg viewBox="0 0 12 10" className="block h-[10px] w-3" aria-hidden="true">
      <path d="M1.500 1l9 8M10.500 1l-9 8" stroke={color} strokeWidth="2" />
    </svg>
  );
}

const tahoma = 'font-["DejaVu_Sans_Condensed","DejaVu_Sans",sans-serif]';

function ViewTabs() {
  return (
    <div className={`flex h-[30px] shrink-0 flex-col bg-[#c0c0c0] text-[11px] ${tahoma}`}>
      <div className="flex h-[26px] items-end border-b border-black bg-white">
        <button type="button" className="flex h-[22px] w-[61px] items-center gap-[6px] pl-2">
          {icons.data} Data
        </button>
        <button type="button" className="flex h-[22px] w-[68px] items-center gap-[6px] border-l border-black pl-[3px]">
          {icons.layout} Layout
        </button>
        <button
          type="button"
          className="-mb-px flex h-[23px] w-[71px] items-center gap-[5px] rounded-t-[2px] border border-b-0 border-black bg-[#c0c0c0] pl-[3px]"
        >
          {icons.preview} Preview
        </button>
      </div>
    </div>
  );
}

function Parameters() {
  return (
    <div className={`flex h-[66px] shrink-0 bg-[#c0c0c0] text-[11px] ${tahoma}`}>
      <div className="grid flex-1 grid-cols-[49px_214px_33px_1fr] grid-rows-[25px_25px] items-center pl-1">
        <label htmlFor="runDate" className="-mt-[2px]">
          RunDate
        </label>
        <div className="flex items-center gap-[3px]">
          <input id="runDate" defaultValue="15/09/2009" className="h-[19px] w-[151px] border border-[#d4d4d4] bg-white px-[2px]" />
          <button type="button" aria-label="Pick a date" className="-mt-[2px]">
            {icons.calendar}
          </button>
        </div>
        <label htmlFor="dept" className="-mt-[2px]">
          DEPT
        </label>
        <ParamSelect id="dept" value="ALL Departments" className="w-[123px]" />
        <label htmlFor="resp" className="-mt-[2px]">
          Resp
        </label>
        <ParamSelect id="resp" value="ALL Employees" className="w-[130px]" />
      </div>
      <div className="mb-[3px] w-[89px] border-l border-black pt-[5px] pl-[5px]">
        <button
          type="button"
          className="h-[21px] w-[78px] rounded-[3px] border border-[#3c7fb1] bg-linear-to-b from-[#f2f2f2] to-[#d4d4d4] pt-[2px] pr-1 whitespace-nowrap inset-ring inset-ring-[#48d0f4]"
        >
          View Report
        </button>
      </div>
    </div>
  );
}

function ViewerToolbar() {
  return (
    <div className={`flex h-[25px] shrink-0 items-center pl-[2px] text-[13px] leading-4 ${barTone} ${tahoma}`}>
      <Grip />
      <IconButton name="docMap" />
      <button
        type="button"
        aria-label="Show parameters"
        className="ml-px flex h-[22px] w-[23px] items-center justify-center border border-[#0a0a80] bg-[#d4d6e2]"
      >
        {icons.paramTree}
      </button>
      <div className="ml-[2px] flex items-center self-stretch">
        <Sep />
        <IconButton name="first" />
        <IconButton name="prev" />
      </div>
      <input aria-label="Current page" defaultValue="1" className="ml-[3px] h-[22px] w-10 bg-white px-[3px]" />
      <span className="w-[34px] pl-1 whitespace-pre">of  1</span>
      <IconButton name="next" />
      <IconButton name="last" />
      <Sep />
      <IconButton name="back" />
      <IconButton name="stop" />
      <IconButton name="refresh" />
      <Sep />
      <IconButton name="print" />
      <IconButton name="printLayout" />
      <IconButton name="pageSetup" />
      <IconButton name="save" />
      <Drop label="Export formats" />
      <Sep />
      <div className="relative ml-[5px] h-[23px] w-[101px]">
        <select aria-label="Zoom" className="block h-full w-full appearance-none bg-white pl-1 text-[13px]">
          <option>100%</option>
        </select>
        <span className="pointer-events-none absolute inset-y-px right-px flex w-2 items-center justify-center bg-[#ececec]">
          <Arrow />
        </span>
      </div>
      <input aria-label="Find text" className="ml-[10px] h-[22px] w-[75px] bg-white px-1" />
      <button type="button" className="ml-[7px] text-[#909090]">
        Find
      </button>
      <div className="ml-[9px] self-stretch pt-[8px] pb-[5px]">
        <div className="h-full w-px bg-[#a8a8a8]" />
      </div>
      <button type="button" className="ml-[6px] text-[#909090]">
        Next
      </button>
    </div>
  );
}

function ReportTable() {
  return (
    <table className="w-[1297px] table-fixed border-collapse text-[13px] leading-4">
      <colgroup>
        <col className="w-[95px]" />
        <col className="w-[58px]" />
        <col className="w-[85px]" />
        <col className="w-[303px]" />
        {amountHeads.map((h) => (
          <col key={h} />
        ))}
      </colgroup>
      <thead>
        <tr className="h-6 bg-black text-left text-white">
          <th className="pb-[2px] pl-[5px] font-normal whitespace-nowrap">DEPT NAME</th>
          <th className="pb-[2px] pl-[5px] font-normal">EMPL</th>
          <th className="pb-[2px] pl-[5px] font-normal">CLIENT</th>
          <th className="pb-[2px] pl-[5px] font-normal">MATTER NAME</th>
          {amountHeads.map((h) => (
            <th key={h} className="pr-[5px] pb-[2px] text-right font-normal">
              {h}
            </th>
          ))}
        </tr>
      </thead>
      <tbody>
        {rows.map((r) => (
          <tr key={r.dept ?? r.empl} className="h-6">
            {r.dept ? (
              <td colSpan={4} className="pb-[2px] pl-1">
                <div className="flex items-center gap-[11px]">
                  <Toggle open label={`Collapse ${r.dept}`} />
                  <a href="#report" className="underline underline-offset-3">
                    {r.dept}
                  </a>
                </div>
              </td>
            ) : (
              <>
                <td />
                <td colSpan={3} className="pb-[2px] pl-1">
                  <div className="flex items-center gap-3">
                    <Toggle label={`Expand ${r.empl}`} />
                    <span>{r.empl}</span>
                  </div>
                </td>
              </>
            )}
            {r.v.map((v, i) => (
              <td key={i} className="pr-[5px] pb-[2px] text-right">
                {v}
              </td>
            ))}
          </tr>
        ))}
        <tr className="h-6">
          <td colSpan={3} />
          <td className="pb-[2px] pl-[5px]">Firm Totals:</td>
          {totals.map((v, i) => (
            <td key={i} className="border-y border-black pr-[5px] pb-[2px] text-right">
              {v}
            </td>
          ))}
        </tr>
      </tbody>
    </table>
  );
}

function ScrollArrow({ d, label, className }: { d: string; label: string; className: string }) {
  return (
    <button type="button" aria-label={label} className={`flex shrink-0 items-center justify-center ${className}`}>
      <svg viewBox="0 0 6 6" className="h-[6px] w-[6px]" aria-hidden="true">
        <path d={d} fill="#333" />
      </svg>
    </button>
  );
}

function Report() {
  return (
    <div className="flex min-h-0 flex-1 flex-col bg-white">
      <div className="flex min-h-0 flex-1">
        <div className="min-w-0 flex-1 overflow-hidden" id="report">
          <h1 className="pt-3 pl-[6px] text-[19px] leading-6 font-bold whitespace-nowrap">
            Aged Unbilled WIP Report by Dept/Matter Responsible Employee
          </h1>
          <p className="pt-[15px] pb-[33px] pl-[5px] text-[13px] leading-4">As at 9/15/2009</p>
          <ReportTable />
        </div>
        <div className="flex w-3 shrink-0 flex-col bg-[#efefef]">
          <ScrollArrow label="Scroll up" d="M0 5l3-4 3 4z" className="h-[13px]" />
          <div className="flex h-[241px] flex-col items-center justify-center gap-px rounded-[2px] border border-[#989898] bg-linear-to-r from-[#f5f5f5] to-[#c4c4ca]">
            <span className="h-[2px] w-[7px] bg-[#707070]" />
            <span className="h-[2px] w-[7px] bg-[#707070]" />
            <span className="h-[2px] w-[7px] bg-[#707070]" />
          </div>
          <ScrollArrow label="Scroll down" d="M0 1l3 4 3-4z" className="mt-auto h-[13px]" />
        </div>
      </div>
      <div className="flex h-[13px] shrink-0 bg-[#efefef]">
        <ScrollArrow label="Scroll left" d="M5 0L1 3l4 3z" className="w-[14px]" />
        <div className="flex flex-1 items-center justify-center gap-px rounded-[2px] border border-[#989898] bg-linear-to-b from-[#f5f5f5] to-[#c8c8cc]">
          <span className="h-[6px] w-[2px] bg-[#707070]" />
          <span className="h-[6px] w-[2px] bg-[#707070]" />
          <span className="h-[6px] w-[2px] bg-[#707070]" />
        </div>
        <ScrollArrow label="Scroll right" d="M1 0l4 3-4 3z" className="ml-12 w-[14px]" />
        <div className="w-[13px] bg-[#c8c8c8]" />
      </div>
    </div>
  );
}

function OutputBar() {
  return (
    <footer className="mt-1 flex h-[23px] shrink-0 items-center bg-[#808080] pr-2 pl-[5px] text-[13px] text-[#c4c4c4]">
      <span>Output</span>
      <div className="ml-auto flex items-center gap-[10px]">
        <button type="button" aria-label="Window position">
          <svg viewBox="0 0 12 6" className="h-[6px] w-3" aria-hidden="true">
            <path d="M0 0h12L6 6z" fill="#c4c4c4" />
          </svg>
        </button>
        <button type="button" aria-label="Auto hide">
          <svg viewBox="0 0 12 15" className="h-[15px] w-3" aria-hidden="true" fill="none" shapeRendering="crispEdges">
            <path d="M3.500 9V1.500h5V9M7.500 2v7M1 9.500h10M5.500 10v5" stroke="#c4c4c4" />
          </svg>
        </button>
        <button type="button" aria-label="Close output">
          <svg viewBox="0 0 12 12" className="h-3 w-3" aria-hidden="true">
            <path d="M1 1l10 10M11 1L1 11" stroke="#c4c4c4" strokeWidth="2" />
          </svg>
        </button>
      </div>
    </footer>
  );
}

export default function App() {
  return (
    <div className='flex h-screen min-h-[600px] flex-col overflow-hidden bg-linear-to-r from-[#c2c2c2] to-[#f0f0f0] to-[640px] font-["Liberation_Sans",Arial,sans-serif] text-black'>
      <MenuBar />
      <StandardToolbar />
      <FormatToolbars />
      <div className="flex min-h-0 flex-1">
        <aside className="flex w-[22px] shrink-0 flex-col gap-4 bg-[#c0c0c0] pt-[3px]">
          <SideTab icon="tools" label="Toolbox" className="h-[71px]" />
          <SideTab icon="dataset" label="Datasets" className="h-[77px]" />
        </aside>
        <div className="flex min-w-0 flex-1 flex-col">
          <main className="flex min-h-0 flex-1 flex-col border border-[#808080] bg-[#c0c0c0] p-px pt-0">
            <DocumentTabs />
            <ViewTabs />
            <div className="flex min-h-0 flex-1 flex-col border border-black">
              <Parameters />
              <ViewerToolbar />
              <Report />
            </div>
          </main>
          <OutputBar />
        </div>
        <aside className="ml-1 flex w-1 shrink-0 flex-col border-l border-[#808080] bg-white">
          <div className="h-[23px] bg-[#808080]" />
          <div className="h-[27px] border-b border-[#808080] bg-[#d8d8d8]" />
          <div className="h-[508px] border-b border-[#808080]" />
          <div className="mt-1 h-[23px] bg-[#808080]" />
          <div className="h-[27px] bg-[#dcdcdc]" />
          <div className="h-[26px] border-b border-[#808080] bg-[#c8c8c8] py-px pl-[2px]">
            <div className="h-full bg-[#0a0a60]" />
          </div>
        </aside>
      </div>
    </div>
  );
}
